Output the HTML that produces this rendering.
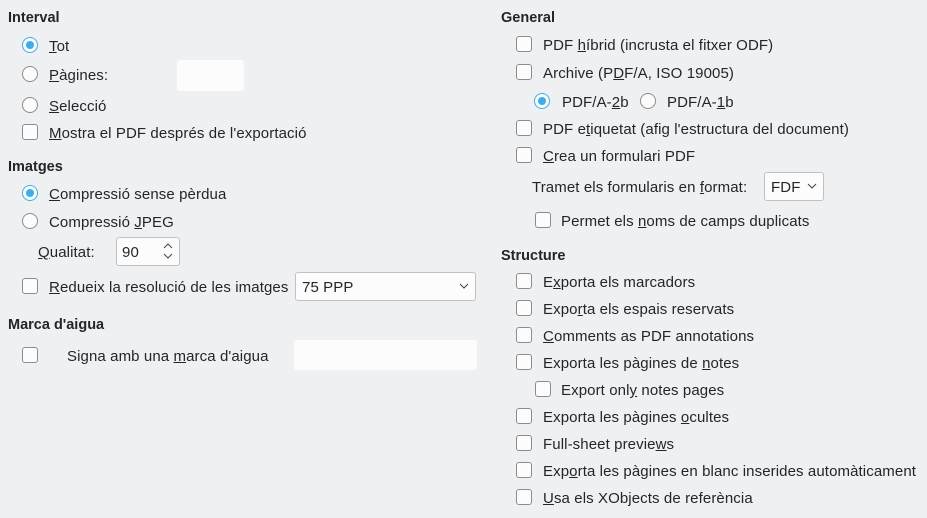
<!DOCTYPE html>
<html><head><meta charset="utf-8"><style>
body{margin:0;width:927px;height:518px;background:#eff0f1;font-family:"Liberation Sans","DejaVu Sans",sans-serif;font-size:15px;letter-spacing:0.1px;color:#232629;position:relative;overflow:hidden}
.t{position:absolute;line-height:20px;white-space:nowrap;margin-top:2px}
.b{font-weight:bold;font-size:14.5px;letter-spacing:0;margin-top:1px}
.cb{position:absolute;width:14px;height:14px;border:1px solid #8a8d90;border-radius:3px;background:#fcfcfc}
.rd{position:absolute;width:14px;height:14px;border:1px solid #8a8d90;border-radius:50%;background:#fcfcfc}
.rd.on{border-color:#3daee9;background:#fcfcfc}
.rd.on::after{content:"";position:absolute;left:3px;top:3px;width:8px;height:8px;border-radius:50%;background:#3daee9}
.fld{position:absolute;background:#fcfcfc;border-radius:3px}
.box{position:absolute;background:#fcfcfc;border:1px solid #bfc2c5;border-radius:3px;box-sizing:border-box}
u{text-decoration:underline}
</style></head><body>
<div class="t b" style="left:8px;top:7px">Interval</div>
<div class="rd on" style="left:22px;top:37px"></div><div class="t" style="left:49px;top:35px"><u>T</u>ot</div>
<div class="rd" style="left:22px;top:66px"></div><div class="t" style="left:49px;top:64px"><u>P</u>àgines:</div>
<div class="fld" style="left:177px;top:60px;width:67px;height:31px"></div>
<div class="rd" style="left:22px;top:97px"></div><div class="t" style="left:49px;top:95px"><u>S</u>elecció</div>
<div class="cb" style="left:22px;top:124px"></div><div class="t" style="left:49px;top:122px"><u>M</u>ostra el PDF després de l'exportació</div>

<div class="t b" style="left:8px;top:156px">Imatges</div>
<div class="rd on" style="left:22px;top:185px"></div><div class="t" style="left:49px;top:183px"><u>C</u>ompressió sense pèrdua</div>
<div class="rd" style="left:22px;top:213px"></div><div class="t" style="left:49px;top:211px">Compressió <u>J</u>PEG</div>
<div class="t" style="left:38px;top:241px"><u>Q</u>ualitat:</div>
<div class="box" style="left:116px;top:237px;width:64px;height:29px"></div>
<div class="t" style="left:122px;top:241px">90</div>
<svg style="position:absolute;left:162px;top:241px" width="12" height="20"><path d="M2 7 L6 3 L10 7 M2 13 L6 17 L10 13" fill="none" stroke="#444" stroke-width="1"/></svg>
<div class="cb" style="left:22px;top:278px"></div><div class="t" style="left:49px;top:276px"><u>R</u>edueix la resolució de les imatges</div>
<div class="box" style="left:295px;top:272px;width:181px;height:29px"></div>
<div class="t" style="left:302px;top:276px">75 PPP</div>
<svg style="position:absolute;left:458px;top:282px" width="12" height="8"><path d="M2 2 L6 6 L10 2" fill="none" stroke="#444"/></svg>

<div class="t b" style="left:8px;top:314px">Marca d'aigua</div>
<div class="cb" style="left:22px;top:347px"></div><div class="t" style="left:67px;top:345px">Signa amb una <u>m</u>arca d'aigua</div>
<div class="fld" style="left:294px;top:340px;width:183px;height:30px"></div>

<div class="t b" style="left:501px;top:7px">General</div>
<div class="cb" style="left:516px;top:36px"></div><div class="t" style="left:543px;top:34px">PDF <u>h</u>íbrid (incrusta el fitxer ODF)</div>
<div class="cb" style="left:516px;top:64px"></div><div class="t" style="left:543px;top:62px">Archive (P<u>D</u>F/A, ISO 19005)</div>
<div class="rd on" style="left:534px;top:93px"></div><div class="t" style="left:562px;top:91px">PDF/A-<u>2</u>b</div>
<div class="rd" style="left:640px;top:93px"></div><div class="t" style="left:667px;top:91px">PDF/A-<u>1</u>b</div>
<div class="cb" style="left:516px;top:120px"></div><div class="t" style="left:543px;top:118px">PDF e<u>t</u>iquetat (afig l'estructura del document)</div>
<div class="cb" style="left:516px;top:147px"></div><div class="t" style="left:543px;top:145px"><u>C</u>rea un formulari PDF</div>
<div class="t" style="left:532px;top:176px">Tramet els formularis en <u>f</u>ormat:</div>
<div class="box" style="left:764px;top:172px;width:60px;height:29px"></div>
<div class="t" style="left:771px;top:176px">FDF</div>
<svg style="position:absolute;left:806px;top:182px" width="12" height="8"><path d="M2 2 L6 6 L10 2" fill="none" stroke="#444"/></svg>
<div class="cb" style="left:535px;top:212px"></div><div class="t" style="left:561px;top:210px">Permet els <u>n</u>oms de camps duplicats</div>

<div class="t b" style="left:501px;top:245px">Structure</div>
<div class="cb" style="left:516px;top:273px"></div><div class="t" style="left:543px;top:271px">E<u>x</u>porta els marcadors</div>
<div class="cb" style="left:516px;top:300px"></div><div class="t" style="left:543px;top:298px">Expo<u>r</u>ta els espais reservats</div>
<div class="cb" style="left:516px;top:327px"></div><div class="t" style="left:543px;top:325px"><u>C</u>omments as PDF annotations</div>
<div class="cb" style="left:516px;top:354px"></div><div class="t" style="left:543px;top:352px">Exporta les pàgines de <u>n</u>otes</div>
<div class="cb" style="left:535px;top:381px"></div><div class="t" style="left:561px;top:379px">Export onl<u>y</u> notes pages</div>
<div class="cb" style="left:516px;top:408px"></div><div class="t" style="left:543px;top:406px">Exporta les pàgines <u>o</u>cultes</div>
<div class="cb" style="left:516px;top:435px"></div><div class="t" style="left:543px;top:433px">Full-sheet previe<u>w</u>s</div>
<div class="cb" style="left:516px;top:462px"></div><div class="t" style="left:543px;top:460px">Exp<u>o</u>rta les pàgines en blanc inserides automàticament</div>
<div class="cb" style="left:516px;top:489px"></div><div class="t" style="left:543px;top:487px"><u>U</u>sa els XObjects de referència</div>
</body></html>
